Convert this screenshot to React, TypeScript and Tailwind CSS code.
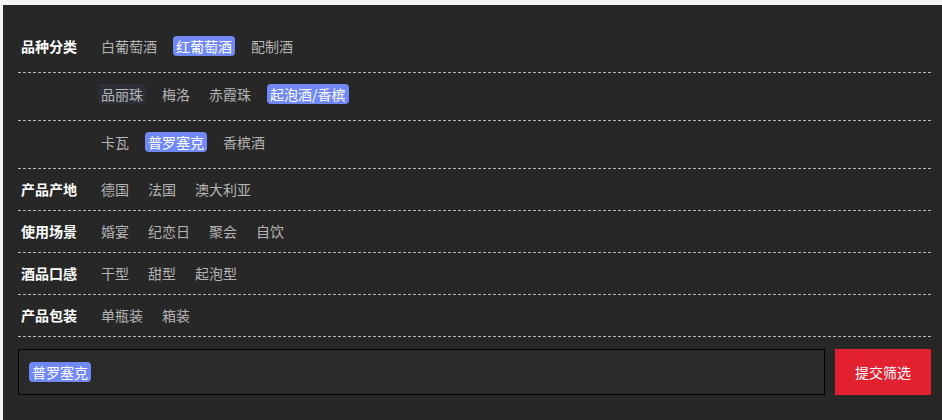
import React, { useState } from 'react';

type Group = {
    label: string;
    rows: string[][];
    tall?: boolean;
};

const groups: Group[] = [
    {
        label: '品种分类',
        tall: true,
        rows: [
            ['白葡萄酒', '红葡萄酒', '配制酒'],
            ['品丽珠', '梅洛', '赤霞珠', '起泡酒/香槟'],
            ['卡瓦', '普罗塞克', '香槟酒'],
        ],
    },
    { label: '产品产地', rows: [['德国', '法国', '澳大利亚']] },
    { label: '使用场景', rows: [['婚宴', '纪恋日', '聚会', '自饮']] },
    { label: '酒品口感', rows: [['干型', '甜型', '起泡型']] },
    { label: '产品包装', rows: [['单瓶装', '箱装']] },
];

const initialSelected = ['红葡萄酒', '起泡酒/香槟', '普罗塞克'];

function App() {
    const [selected, setSelected] = useState<string[]>(initialSelected);
    const [hovered, setHovered] = useState<string | null>('品丽珠');

    const toggle = (item: string) => {
        setSelected((s) => (s.includes(item) ? s.filter((x) => x !== item) : [...s, item]));
    };

    return (
        <div
            className="min-h-[420px] bg-[#f4f4f4] pl-[3px] pt-[5px]"
            style={{ fontFamily: '"Noto Sans CJK SC", "Noto Sans", sans-serif' }}
        >
            <div className="min-h-[415px] bg-[#272727] pl-[15px] pr-[11px] pt-[20px]">
                {/* 筛选条件 */}
                {groups.map((group) =>
                    group.rows.map((row, i) => (
                        <div
                            key={group.label + i}
                            className={`flex border-b border-dashed border-[#b8b8b8] ${group.tall ? 'h-[48px] items-start pt-[11px]' : 'h-[42px] items-center pb-[2px]'}`}
                        >
                            <div className="w-[80px] shrink-0 px-[3px] text-[14px] font-bold text-white leading-[20px]">
                                {i === 0 ? group.label : ''}
                            </div>
                            <div className="flex items-center gap-[13px]">
                                {row.map((item) => {
                                    const active = selected.includes(item);
                                    return (
                                        <span
                                            key={item}
                                            onClick={() => toggle(item)}
                                            onMouseEnter={() => setHovered(item)}
                                            onMouseLeave={() => setHovered(null)}
                                            className={`cursor-pointer rounded-[4px] px-[3px] text-[14px] leading-[20px] ${active
                                                ? 'bg-[#7189f7] text-white'
                                                : hovered === item
                                                    ? 'bg-[#2d2f36] text-[#b4b4b4]'
                                                    : 'text-[#b4b4b4]'
                                                }`}
                                        >
                                            {item}
                                        </span>
                                    );
                                })}
                            </div>
                        </div>
                    ))
                )}

                {/* 已选 + 提交 */}
                <div className="mt-[12px] flex gap-[10px]">
                    <div className="flex h-[46px] flex-1 items-center gap-[8px] border border-black bg-[#2a2a2a] pl-[10px]">
                        {selected
                            .filter((s) => s === '普罗塞克')
                            .map((s) => (
                                <span
                                    key={s}
                                    className="rounded-[4px] bg-[#7189f7] px-[3px] text-[14px] leading-[20px] text-white"
                                >
                                    {s}
                                </span>
                            ))}
                    </div>
                    <button className="h-[46px] w-[96px] bg-[#e32030] text-[14px] text-white">提交筛选</button>
                </div>
            </div>
        </div>
    );
}

export default App;
